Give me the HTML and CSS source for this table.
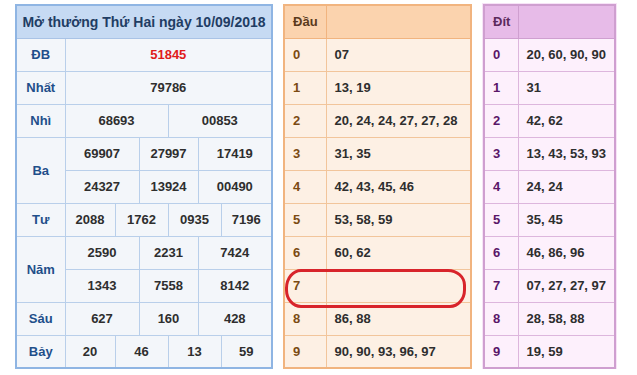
FILE: index.html
```html
<!DOCTYPE html>
<html>
<head>
<meta charset="utf-8">
<link rel="stylesheet" href="styles.css">
</head>
<body>
<div class="page">
  <table class="kq">
    <colgroup>
      <col class="c-lbl"><col class="c1"><col class="c2"><col class="c3"><col class="c4"><col class="c5"><col class="c6">
    </colgroup>
    <tr><th class="title" colspan="7">Mở thưởng Thứ Hai ngày 10/09/2018</th></tr>
    <tr><td class="lbl">ĐB</td><td colspan="6" class="special">51845</td></tr>
    <tr><td class="lbl">Nhất</td><td colspan="6">79786</td></tr>
    <tr><td class="lbl">Nhì</td><td colspan="3">68693</td><td colspan="3">00853</td></tr>
    <tr><td class="lbl" rowspan="2">Ba</td><td colspan="2">69907</td><td colspan="2">27997</td><td colspan="2">17419</td></tr>
    <tr><td colspan="2">24327</td><td colspan="2">13924</td><td colspan="2">00490</td></tr>
    <tr><td class="lbl">Tư</td><td>2088</td><td colspan="2">1762</td><td colspan="2">0935</td><td>7196</td></tr>
    <tr><td class="lbl" rowspan="2">Năm</td><td colspan="2">2590</td><td colspan="2">2231</td><td colspan="2">7424</td></tr>
    <tr><td colspan="2">1343</td><td colspan="2">7558</td><td colspan="2">8142</td></tr>
    <tr><td class="lbl">Sáu</td><td colspan="2">627</td><td colspan="2">160</td><td colspan="2">428</td></tr>
    <tr><td class="lbl">Bảy</td><td>20</td><td colspan="2">46</td><td colspan="2">13</td><td>59</td></tr>
  </table>

  <div class="wrap-dau">
    <table class="lt dau">
      <tr><th class="k">Đầu</th><th></th></tr>
      <tr><td class="k">0</td><td>07</td></tr>
      <tr><td class="k">1</td><td>13, 19</td></tr>
      <tr><td class="k">2</td><td>20, 24, 24, 27, 27, 28</td></tr>
      <tr><td class="k">3</td><td>31, 35</td></tr>
      <tr><td class="k">4</td><td>42, 43, 45, 46</td></tr>
      <tr><td class="k">5</td><td>53, 58, 59</td></tr>
      <tr><td class="k">6</td><td>60, 62</td></tr>
      <tr><td class="k">7</td><td></td></tr>
      <tr><td class="k">8</td><td>86, 88</td></tr>
      <tr><td class="k">9</td><td>90, 90, 93, 96, 97</td></tr>
    </table>
    <div class="mark"></div>
  </div>

  <table class="lt dit">
    <tr><th class="k">Đít</th><th></th></tr>
    <tr><td class="k">0</td><td>20, 60, 90, 90</td></tr>
    <tr><td class="k">1</td><td>31</td></tr>
    <tr><td class="k">2</td><td>42, 62</td></tr>
    <tr><td class="k">3</td><td>13, 43, 53, 93</td></tr>
    <tr><td class="k">4</td><td>24, 24</td></tr>
    <tr><td class="k">5</td><td>35, 45</td></tr>
    <tr><td class="k">6</td><td>46, 86, 96</td></tr>
    <tr><td class="k">7</td><td>07, 27, 27, 97</td></tr>
    <tr><td class="k">8</td><td>28, 58, 88</td></tr>
    <tr><td class="k">9</td><td>19, 59</td></tr>
  </table>
</div>
</body>
</html>
```

FILE: styles.css
```css
html, body {
  margin: 0;
  padding: 0;
  background: #ffffff;
}
body {
  font-family: "Liberation Sans", Arial, sans-serif;
  font-size: 13px;
  font-weight: bold;
  color: #2b2b2b;
}
.page {
  display: flex;
  align-items: flex-start;
  padding: 4px 0 0 15px;
  gap: 10px;
}
table {
  border-collapse: collapse;
  table-layout: fixed;
}
th, td {
  height: 33px;
  padding: 0;
  box-sizing: border-box;
  font-weight: bold;
}

/* results table */
.kq {
  width: 258px;
  border: 2px solid #8fb5e3;
  background: #f3f6fa;
}
.kq .c-lbl { width: 49px; }
.kq .c1 { width: 50px; }
.kq .c2 { width: 24px; }
.kq .c3 { width: 29px; }
.kq .c4 { width: 30px; }
.kq .c5 { width: 23px; }
.kq .c6 { width: 51px; }
.kq td {
  border: 1px solid #b9cfea;
  text-align: center;
  color: #2e2e2e;
}
.kq .title {
  background: #c6daf3;
  color: #1f3d64;
  font-size: 14px;
  text-align: center;
  border-bottom: 1px solid #a9c3e6;
}
.kq .lbl {
  color: #1f4f8a;
}
.kq .special {
  color: #e01b1b;
}

/* loto tables */
.lt th, .lt td {
  text-align: left;
  padding-left: 8px;
}
.lt td { color: #2e2e2e; }

.wrap-dau {
  position: relative;
}
.dau {
  width: 189px;
  border: 2px solid #f1b47f;
  background: #fdf0e4;
}
.dau th {
  background: #fbd3ae;
  color: #5a3a1c;
  border: 1px solid #f1b47f;
}
.dau td {
  border: 1px solid #f2c59b;
}
.dau .k {
  width: 42px;
}
.dau td.k {
  color: #7b4a12;
}

.dit {
  width: 133px;
  margin-left: 1px;
  border: 2px solid #cf9fd0;
  background: #fdf0fc;
  box-shadow: 0 0 0 1px #f7e3f7;
}
.dit th {
  background: #e7bbe8;
  color: #5b2a5c;
  border: 1px solid #cf9fd0;
}
.dit td {
  border: 1px solid #ddb6dd;
}
.dit .k {
  width: 34px;
}
.dit td.k {
  color: #5a1668;
}

.mark {
  position: absolute;
  left: 2px;
  top: 265px;
  width: 181px;
  height: 39px;
  box-sizing: border-box;
  border: 3px solid #d8242b;
  border-radius: 16px 18px 16px 16px / 19px 16px 18px 18px;
}
```
